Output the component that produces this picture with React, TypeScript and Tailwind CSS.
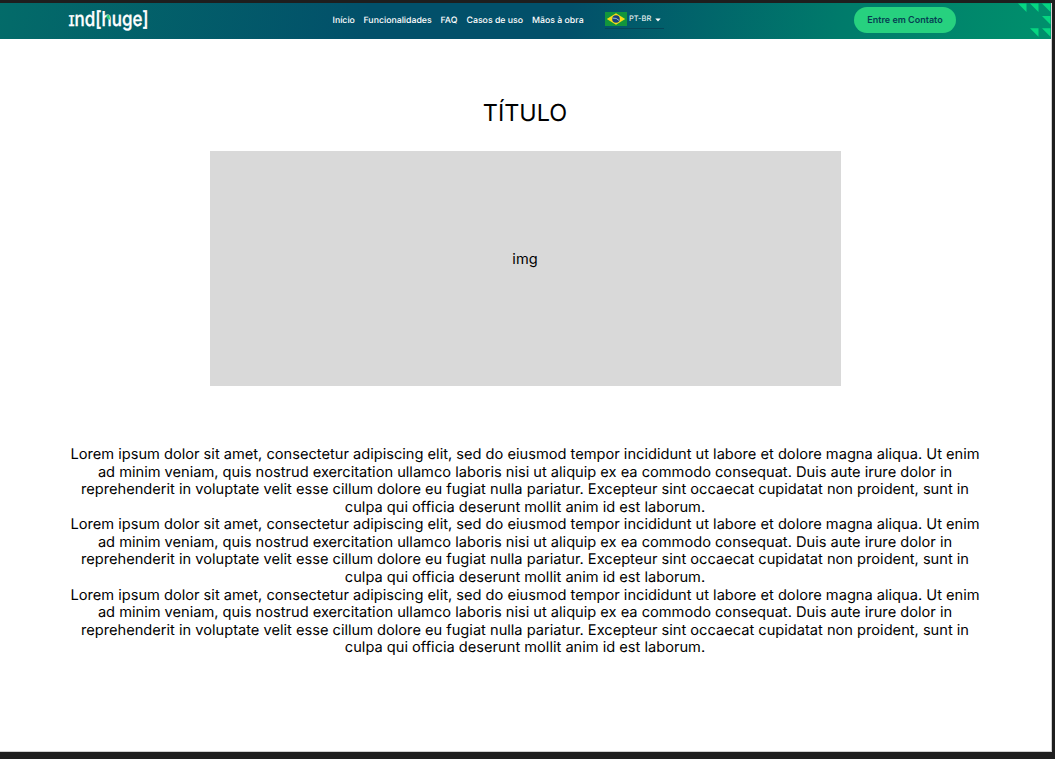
const links = ['Início', 'Funcionalidades', 'FAQ', 'Casos de uso', 'Mãos à obra'];

const linkWidths = ['w-[22px]', 'w-[68px]', 'w-[17px]', 'w-[56.5px]', 'w-[53px]'];

const lines = [
  'Lorem ipsum dolor sit amet, consectetur adipiscing elit, sed do eiusmod tempor incididunt ut labore et dolore magna aliqua. Ut enim',
  'ad minim veniam, quis nostrud exercitation ullamco laboris nisi ut aliquip ex ea commodo consequat. Duis aute irure dolor in',
  'reprehenderit in voluptate velit esse cillum dolore eu fugiat nulla pariatur. Excepteur sint occaecat cupidatat non proident, sunt in',
  'culpa qui officia deserunt mollit anim id est laborum.',
];

function Logo() {
  return (
    <svg width="82" height="36" viewBox="0 0 82 36" className="ml-[68px] shrink-0 overflow-visible" fill="white">
      <text x="0.5" y="22.8" fontSize="20.5" fontWeight="500" stroke="white" strokeWidth=".35" textLength="80" lengthAdjust="spacingAndGlyphs">
        ɪnd[huge]
      </text>
      <path d="M38.3 12.5l3-.8.8 5-3.3-1.5z" fill="#22d07a" />
    </svg>
  );
}

function Flag() {
  return (
    <svg width="22" height="14" viewBox="0 0 22 14" className="shrink-0">
      <path fill="#12963c" d="M0 0h22v14H0z" />
      <path fill="#f8dc18" d="M11 1.3 20.2 7 11 12.7 1.8 7z" />
      <circle cx="11" cy="7" r="3.8" fill="#173f7c" />
      <path d="M7.6 6.1q4-.5 6.5 2.4" stroke="#dbe7e8" strokeWidth=".7" fill="none" />
    </svg>
  );
}

function Corner() {
  return (
    <svg width="36" height="36" viewBox="0 0 36 36" className="ml-auto shrink-0" fill="#06d681">
      <path d="M3 .5h8.5V9zM15 .5h8.5V9zM27 .5h8.5V9zM27 13h8.5v8.5zM15 25.2h8.5v8.5zM27 25.2h8.5v8.5z" />
    </svg>
  );
}

export default function App() {
  return (
    <div className="h-[759px] w-[1055px] overflow-hidden bg-[#1e1e1e] pt-[3px] font-['Inter',sans-serif] text-black [text-rendering:geometricPrecision]">
      <div className="h-[749px] w-[1052px] border-r border-b border-[#d0d0d0] bg-white">
        <header className="flex h-9 w-[1051px] items-center bg-[linear-gradient(100deg,#036b69_0%,#02506a_35%,#02506a_54%,#007b6b_80%,#00906c_100%)] text-white">
          <Logo />
          <nav className="ml-[182.5px] flex gap-[9px] pb-[1px] text-[8.75px] leading-3 font-medium">
            {links.map((link, i) => (
              <a key={link} className={`whitespace-nowrap ${linkWidths[i]}`}>{link}</a>
            ))}
          </nav>
          <div className="mb-[3px] ml-[20px] flex h-[18px] w-[59px] items-center border-b border-[#064557] text-[7.5px]">
            <Flag />
            <span className="ml-[2px] whitespace-nowrap">PT-BR</span>
            <svg width="6" height="4" viewBox="0 0 6 4" className="mt-[2px] ml-1 shrink-0" fill="white"><path d="M.3.5h5.4L3 3.5z" /></svg>
          </div>
          <button className="mb-[2px] ml-[190px] h-[26px] w-[102px] shrink-0 rounded-full bg-[#27d17f] text-[9px] font-semibold whitespace-nowrap text-[#053f52]">
            Entre em Contato
          </button>
          <Corner />
        </header>
        <main className="flex w-[1050px] flex-col items-center">
          <h1 className="mt-[59px] text-[23.4px] leading-[30px]">TÍTULO</h1>
          <div className="mt-[23px] flex h-[235px] w-[631px] items-center justify-center bg-[#d9d9d9] pb-[17px] text-[14.6px]">img</div>
          <div className="mt-[60px] text-center text-[14.64px] leading-[17.58px] whitespace-nowrap">
            {[0, 1, 2].map((n) => (
              <p key={n}>
                {lines.map((line) => (
                  <span key={line} className="block">{line}</span>
                ))}
              </p>
            ))}
          </div>
        </main>
      </div>
    </div>
  );
}
